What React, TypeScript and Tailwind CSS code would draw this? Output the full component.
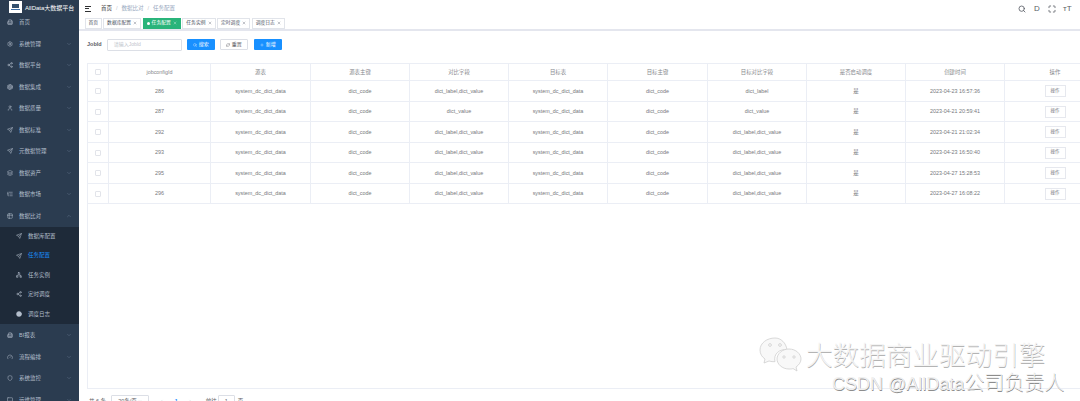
import { Building2, ChevronDown, ChevronUp, ChevronLeft, ChevronRight, Search, RefreshCw, Plus, Settings, Share2, Aperture, User, Send, Layers, ListTree, Table2, Network, Gauge, Shield, Monitor, Maximize, Circle, X } from 'lucide-react'

const topMenu = [
  { label: '系统管理', icon: Settings },
  { label: '数据平台', icon: Share2 },
  { label: '数据集成', icon: Aperture },
  { label: '数据质量', icon: User },
  { label: '数据标准', icon: Send },
  { label: '元数据管理', icon: Send },
  { label: '数据资产', icon: Layers },
  { label: '数据市场', icon: ListTree },
]

const subMenu = [
  { label: '数据库配置', icon: Send },
  { label: '任务配置', icon: Send, active: true },
  { label: '任务实例', icon: Network },
  { label: '定时调度', icon: Share2 },
  { label: '调度日志', icon: Circle, fill: true },
]

const bottomMenu = [
  { label: 'BI报表', icon: Building2 },
  { label: '流程编排', icon: Gauge },
  { label: '系统监控', icon: Shield },
  { label: '运维管理', icon: Monitor },
]

const tabs = ['数据库配置', '任务配置', '任务实例', '定时调度', '调度日志']

const headers = ['jobconfigId', '源表', '源表主键', '对比字段', '目标表', '目标主键', '目标对比字段', '是否启动调度', '创建时间']
const widths = ['w-[102px]', 'w-[100px]', 'w-[99px]', 'w-[99px]', 'w-[99px]', 'w-[100px]', 'w-[99px]', 'w-[99px]', 'w-[99px]']

const both = 'dict_label,dict_value'
const rows = [
  ['286', both, 'dict_label', '2023-04-23 16:57:36', 'h-[21px]'],
  ['287', 'dict_value', 'dict_value', '2023-04-21 20:59:41', 'h-[20px]'],
  ['292', both, both, '2023-04-21 21:02:34', 'h-[21px]'],
  ['293', both, both, '2023-04-23 16:50:40', 'h-[20px]'],
  ['295', both, both, '2023-04-27 15:28:53', 'h-[21px]'],
  ['296', both, both, '2023-04-27 16:08:22', 'h-[20px]'],
]

function MenuItem({ label, icon: Icon, open }: { label: string; icon: any; open?: boolean }) {
  return (
    <div className="flex h-[21.5px] shrink-0 items-center pl-[7px] pr-[7px] text-[5.5px] text-[#b4bfcc]">
      <Icon size={6} strokeWidth={2} className="shrink-0" />
      <span className="ml-[6px] flex-1 whitespace-nowrap">{label}</span>
      {open ? <ChevronUp size={6} className="text-[#5f7186]" /> : <ChevronDown size={6} className="text-[#5f7186]" />}
    </div>
  )
}

function Sidebar() {
  return (
    <aside className="flex h-[401px] w-[79px] shrink-0 flex-col overflow-hidden bg-[#2b3c50]">
      <div className="flex h-[14px] shrink-0 items-start pl-[9px] pt-[1px]">
        <div className="flex h-[12px] w-[13px] flex-col items-center justify-center bg-white">
          <div className="h-[4px] w-[7px] bg-[#34506e]" />
          <div className="mt-[1px] h-[1px] w-[9px] bg-[#3b6ea8]" />
        </div>
        <span className="ml-[3px] mt-[3px] whitespace-nowrap text-[6px] leading-[8px] text-white">AllData大数据平台</span>
      </div>
      <div className="flex h-[19px] shrink-0 items-center pb-[3px] pl-[7px] text-[5.5px] text-[#b4bfcc]">
        <Building2 size={6} />
        <span className="ml-[6px]">首页</span>
      </div>
      {topMenu.map((m) => (
        <MenuItem key={m.label} label={m.label} icon={m.icon} />
      ))}
      <MenuItem label="数据比对" icon={Table2} open />
      <div className="flex shrink-0 flex-col bg-[#1e2a39] pb-[1px]">
        {subMenu.map((m) => (
          <div
            key={m.label}
            className={`flex h-[19.4px] items-center pl-[16px] text-[5.5px] ${m.active ? 'text-[#1890ff]' : 'text-[#b4bfcc]'}`}
          >
            <m.icon size={6} fill={m.fill ? 'currentColor' : 'none'} className="text-[#b4bfcc]" />
            <span className="ml-[6px] whitespace-nowrap">{m.label}</span>
          </div>
        ))}
      </div>
      {bottomMenu.map((m) => (
        <MenuItem key={m.label} label={m.label} icon={m.icon} />
      ))}
    </aside>
  )
}

function TopBar() {
  return (
    <div className="flex h-[17px] shrink-0 items-center bg-white pl-[6px] pr-[9px]">
      <div className="flex h-[6px] w-[6px] flex-col justify-between">
        <div className="h-[1px] w-full bg-[#303133]" />
        <div className="h-[1px] w-[4px] bg-[#303133]" />
        <div className="h-[1px] w-full bg-[#303133]" />
      </div>
      <span className="ml-[10px] text-[5.5px] text-[#303133]">首页</span>
      <span className="mx-[4px] text-[5.5px] text-[#c0c4cc]">/</span>
      <span className="text-[5.5px] text-[#97a8be]">数据比对</span>
      <span className="mx-[4px] text-[5.5px] text-[#c0c4cc]">/</span>
      <span className="text-[5.5px] text-[#97a8be]">任务配置</span>
      <div className="ml-auto flex items-center gap-[7px] text-[#5a5e66]">
        <Search size={8} strokeWidth={2.5} />
        <span className="w-[8px] text-center text-[8px] leading-none">D</span>
        <Maximize size={8} strokeWidth={2.5} />
        <span className="w-[8px] text-center text-[8px] leading-none">тT</span>
      </div>
    </div>
  )
}

function TabBar() {
  return (
    <div className="flex h-[14px] shrink-0 items-center gap-[1.5px] border-b-2 border-[#e4e6ee] bg-white pl-[6px]">
      <div className="flex h-[11px] items-center border border-[#e1e4ea] px-[2.5px] text-[4.8px] text-[#495060]">首页</div>
      {tabs.map((t) => {
        const active = t === '任务配置'
        return (
          <div
            key={t}
            className={`flex h-[11px] items-center border px-[3px] text-[4.8px] ${
              active ? 'border-[#29b47a] bg-[#29b47a] text-white' : 'border-[#e1e4ea] text-[#495060]'
            }`}
          >
            {active && <span className="mr-[2px] h-[3px] w-[3px] rounded-full bg-white" />}
            <span className="whitespace-nowrap">{t}</span>
            <X size={4} className="ml-[2px]" />
          </div>
        )
      })}
    </div>
  )
}

function Toolbar() {
  return (
    <div className="flex h-[13px] shrink-0 items-center">
      <span className="text-[5.5px] font-bold text-[#606266]">JobId</span>
      <div className="ml-[5px] flex h-[12px] w-[75px] items-center rounded-[1px] border border-[#dcdfe6] pl-[6px] text-[5px] text-[#c0c4cc]">请输入JobId</div>
      <button className="ml-[5px] flex h-[11px] w-[28px] items-center justify-center gap-[2px] rounded-[1px] bg-[#1890ff] text-[5px] text-white">
        <Search size={4} />
        搜索
      </button>
      <button className="ml-[5px] flex h-[11px] w-[28px] items-center justify-center gap-[2px] rounded-[1px] border border-[#dcdfe6] bg-white text-[5px] text-[#606266]">
        <RefreshCw size={4} />
        重置
      </button>
      <button className="ml-[6px] flex h-[11px] w-[28px] items-center justify-center gap-[2px] rounded-[1px] bg-[#1890ff] text-[5px] text-white">
        <Plus size={4} />
        新增
      </button>
    </div>
  )
}

function Checkbox() {
  return <div className="h-[6px] w-[6px] rounded-[1px] border border-[#e2e4ea] bg-white" />
}

function Cell({ width, children }: { width: string; children: React.ReactNode }) {
  return <div className={`flex h-full shrink-0 items-center justify-center whitespace-nowrap border-r border-[#ebeef5] ${width}`}>{children}</div>
}

function DataTable() {
  return (
    <div className="flex h-[326px] w-[1020px] shrink-0 flex-col border border-r-0 border-[#ebeef5] text-[5.4px] text-[#77797d]">
      <div className="flex h-[17px] shrink-0 border-b border-[#ebeef5] text-[#86888c]">
        <Cell width="w-[21px]"><Checkbox /></Cell>
        {headers.map((h, i) => (
          <Cell key={h} width={widths[i]}>{h}</Cell>
        ))}
        <div className="flex w-[100px] items-center justify-center">操作</div>
      </div>
      {rows.map((r) => (
        <div key={r[0]} className={`flex shrink-0 border-b border-[#ebeef5] ${r[4]}`}>
          <Cell width="w-[21px]"><Checkbox /></Cell>
          <Cell width={widths[0]}>{r[0]}</Cell>
          <Cell width={widths[1]}>system_dc_dict_data</Cell>
          <Cell width={widths[2]}>dict_code</Cell>
          <Cell width={widths[3]}>{r[1]}</Cell>
          <Cell width={widths[4]}>system_dc_dict_data</Cell>
          <Cell width={widths[5]}>dict_code</Cell>
          <Cell width={widths[6]}>{r[2]}</Cell>
          <Cell width={widths[7]}>是</Cell>
          <Cell width={widths[8]}>{r[3]}</Cell>
          <div className="flex w-[100px] items-center justify-center">
            <div className="flex h-[12px] w-[21px] items-center justify-center border border-[#e6e8ee] text-[4.5px]">操作</div>
          </div>
        </div>
      ))}
    </div>
  )
}

function Pagination() {
  return (
    <div className="mt-[6px] flex h-[12px] shrink-0 items-center text-[5.5px] text-[#606266]">
      <span className="ml-[2px]">共 6 条</span>
      <div className="ml-[5px] flex h-[12px] w-[38px] items-center justify-between rounded-[1px] border border-[#dcdfe6] px-[6px]">
        20条/页
        <ChevronDown size={4} className="text-[#c0c4cc]" />
      </div>
      <ChevronLeft size={5} className="ml-[9.5px] text-[#c0c4cc]" />
      <span className="ml-[11px] font-bold text-[#1890ff]">1</span>
      <ChevronRight size={5} className="ml-[10.5px] text-[#c0c4cc]" />
      <span className="ml-[12.5px]">前往</span>
      <div className="ml-[1px] flex h-[12px] w-[17px] items-center justify-center rounded-[1px] border border-[#dcdfe6]">1</div>
      <span className="ml-[3px]">页</span>
    </div>
  )
}

function Watermark() {
  return (
    <div className="pointer-events-none absolute left-[759px] top-[336px] text-[#f4f4f4]">
      <div className="flex items-center">
        <svg width="44" height="36" viewBox="0 0 44 36" fill="#f8f8f8" stroke="#cfcfcf" strokeWidth="0.8">
          <path d="M16 2C8 2 1 7 1 14c0 4 2 7 5 9l-1 4 5-2c2 .6 4 .8 6 .7-2-8 5-13 12-12C27 7 22 2 16 2Z" />
          <path d="M30 13c-7 0-12 5-12 10s5 10 12 10c2 0 3 0 4-.5l4 2.5-1-4c3-2 5-5 5-8 0-5-5-10-12-10Z" />
          <circle cx="11" cy="9" r="1.4" />
          <circle cx="21" cy="9" r="1.4" />
          <circle cx="25" cy="21" r="1.2" />
          <circle cx="35" cy="21" r="1.2" />
        </svg>
        <span className="ml-[3px] whitespace-nowrap font-['Noto_Sans_CJK_SC',sans-serif] text-[26.6px] font-light leading-none [text-shadow:0.5px_0.5px_0.5px_#b4b4b4]">
          大数据商业驱动引擎
        </span>
      </div>
      <div className="ml-[73px] mt-[1px] flex items-baseline whitespace-nowrap leading-none text-[#f0f0f0] [text-shadow:0.5px_0.5px_0.5px_#8d8d8d]">
        <span className="text-[18px]">CSDN @AllData</span>
        <span className="text-[20px] font-light">公司负责人</span>
      </div>
    </div>
  )
}

export default function App() {
  return (
    <div className="relative flex h-[401px] w-[1080px] overflow-hidden bg-white font-['Liberation_Sans','Noto_Sans_CJK_SC',sans-serif]">
      <Sidebar />
      <main className="flex min-w-0 flex-1 flex-col overflow-hidden">
        <TopBar />
        <TabBar />
        <div className="flex flex-1 flex-col pl-[8px] pt-[7px]">
          <Toolbar />
          <div className="h-[12px] shrink-0" />
          <DataTable />
          <Pagination />
        </div>
      </main>
      <Watermark />
    </div>
  )
}
